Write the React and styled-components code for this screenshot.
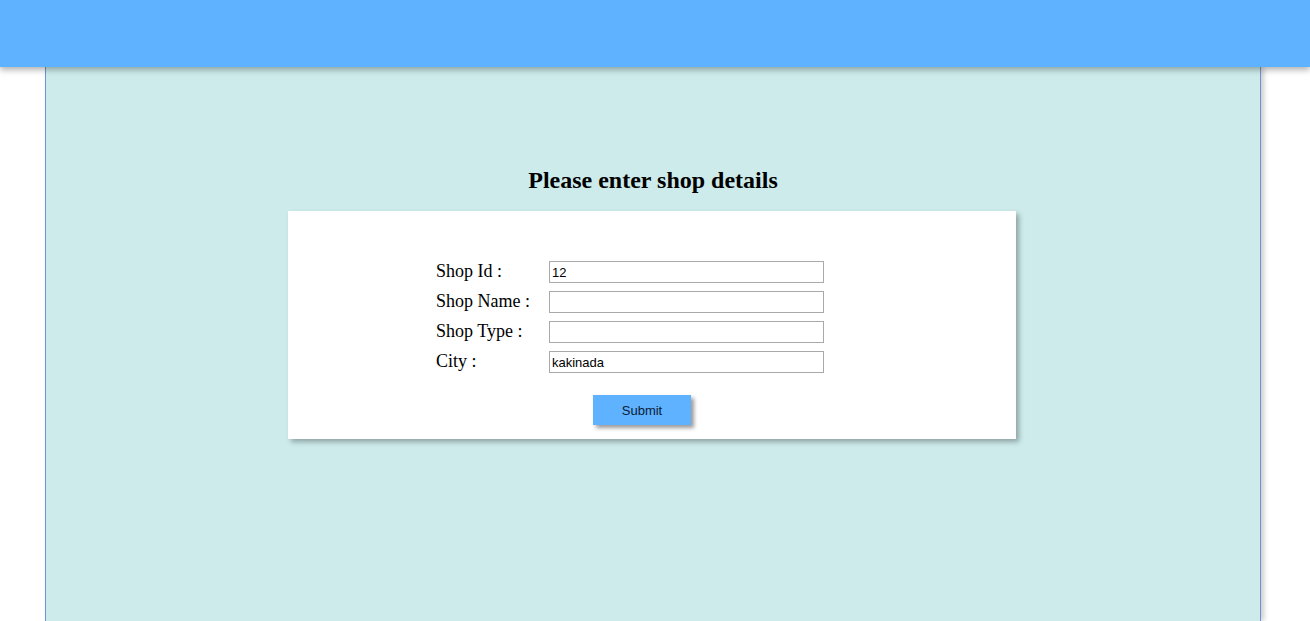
import React from "react";
import styled, { createGlobalStyle } from "styled-components";

const Global = createGlobalStyle`
  html, body { margin: 0; padding: 0; background: #ffffff; overflow: hidden; }
  body { font-family: "Liberation Serif", "Times New Roman", serif; }
`;

const Header = styled.header`
  height: 67px;
  background: #5eb2ff;
  box-shadow: 0 3px 6px rgba(0, 0, 0, 0.3);
  position: relative;
  z-index: 2;
`;

const Panel = styled.main`
  box-sizing: border-box;
  width: 1216px;
  margin-left: 45px;
  height: calc(100vh - 67px);
  background: #cdebeb;
  border-left: 1px solid #6f94d6;
  border-right: 1px solid #6f94d6;
  box-shadow: 3px 0 5px rgba(0, 0, 0, 0.2);
  padding-top: 100px;
  display: flex;
  flex-direction: column;
  align-items: center;
`;

const Title = styled.h2`
  margin: 0 0 17px 0;
  font-family: "Liberation Serif", "Times New Roman", serif;
  font-size: 24px;
  font-weight: bold;
  line-height: 27px;
  color: #000;
  margin-left: 0;
`;

const Card = styled.form`
  box-sizing: border-box;
  width: 728px;
  height: 228px;
  margin-left: -2px;
  background: #fff;
  box-shadow: 3px 3px 5px rgba(0, 0, 0, 0.3);
  padding: 50px 0 0 148px;
`;

const Grid = styled.div`
  display: grid;
  grid-template-columns: 113px 275px;
  row-gap: 8px;
`;

const Label = styled.label`
  font-family: "Liberation Serif", "Times New Roman", serif;
  font-size: 18px;
  line-height: 22px;
  color: #000;
  margin-top: -1px;
`;

const Input = styled.input`
  box-sizing: border-box;
  width: 275px;
  height: 22px;
  border: 1px solid #a9a9a9;
  padding: 0 2px;
  font-family: "Liberation Sans", Arial, sans-serif;
  font-size: 13px;
  color: #000;
  background: #fff;
  outline: none;
`;

const ButtonRow = styled.div`
  padding: 22px 0 0 157px;
`;

const Button = styled.button`
  width: 98px;
  height: 30px;
  border: none;
  background: #5eb2ff;
  box-shadow: 3px 3px 4px rgba(0, 0, 0, 0.4);
  font-family: "Liberation Sans", Arial, sans-serif;
  font-size: 13px;
  color: #0b1b36;
  padding: 0;
  cursor: pointer;
`;

const fields = [
  { label: "Shop Id :", value: "12" },
  { label: "Shop Name :", value: "" },
  { label: "Shop Type :", value: "" },
  { label: "City :", value: "kakinada" },
];

export default function App() {
  return (
    <>
      <Global />
      <Header />
      <Panel>
        <Title>Please enter shop details</Title>
        <Card onSubmit={(e) => e.preventDefault()}>
          <Grid>
            {fields.map((f) => (
              <React.Fragment key={f.label}>
                <Label>{f.label}</Label>
                <Input defaultValue={f.value} />
              </React.Fragment>
            ))}
          </Grid>
          <ButtonRow>
            <Button type="submit">Submit</Button>
          </ButtonRow>
        </Card>
      </Panel>
    </>
  );
}
